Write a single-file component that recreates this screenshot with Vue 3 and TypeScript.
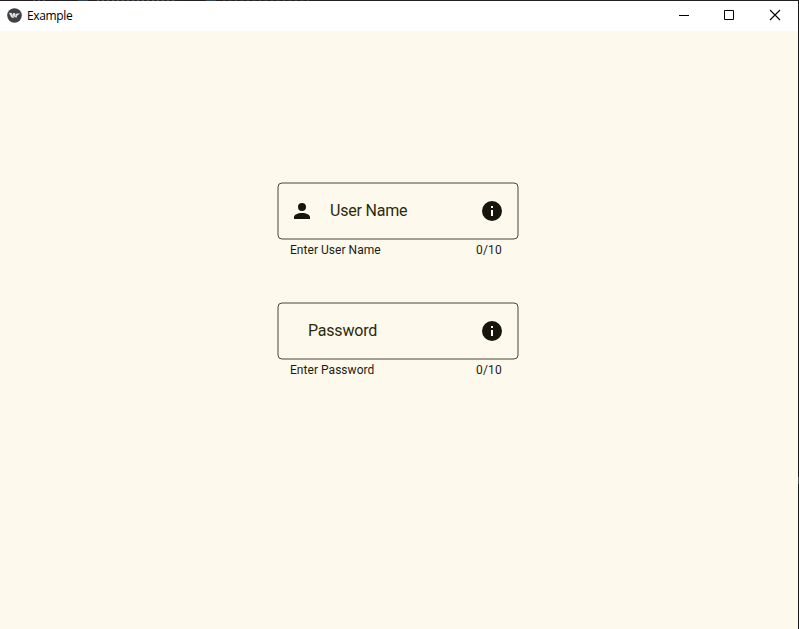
<script setup lang="ts">
interface Field {
  label: string
  helper: string
  count: string
  leadingIcon: boolean
}

const fields: Field[] = [
  { label: 'User Name', helper: 'Enter User Name', count: '0/10', leadingIcon: true },
  { label: 'Password', helper: 'Enter Password', count: '0/10', leadingIcon: false },
]
</script>

<template>
  <div class="window">
    <header class="titlebar">
      <svg class="logo" width="15" height="15" viewBox="0 0 15 15">
        <circle cx="7.5" cy="7.5" r="7.3" fill="#3f4145" />
        <path d="M2 4.8 L4.6 5 L5.7 6.8 L6.3 5 L8 5 L8.5 6.8 L9.6 5.5 L13.3 5.5 L10.5 7.3 L9.2 9.9 L7.6 8.6 L6.2 10.2 L4 9 Z" fill="#e3e4e5" />
        <path d="M5.2 6.7 L6.6 9.2 M8 6.2 L8.8 8.3" stroke="#77797c" stroke-width=".5" />
      </svg>
      <span class="title">Example</span>
      <div class="controls">
        <button class="control minimize" aria-label="Minimize">
          <svg width="12" height="12" viewBox="0 0 12 12" shape-rendering="crispEdges"><path d="M1 6h10v1H1z" /></svg>
        </button>
        <button class="control" aria-label="Maximize">
          <svg width="12" height="12" viewBox="0 0 12 12"><path d="M1.5 1.5h9v9h-9z" fill="none" stroke="#000" /></svg>
        </button>
        <button class="control" aria-label="Close">
          <svg width="12" height="12" viewBox="0 0 12 12"><path d="M1 1l10 10M11 1L1 11" fill="none" stroke="#000" stroke-width="1.1" /></svg>
        </button>
      </div>
    </header>
    <main class="content">
      <div v-for="field in fields" :key="field.label" class="field">
        <div class="box" :class="{ plain: !field.leadingIcon }">
          <svg class="outline" width="242" height="58" viewBox="0 0 242 58">
            <rect x="1" y="1" width="240" height="56" rx="4" fill="none" stroke="#48473b" />
          </svg>
          <svg v-if="field.leadingIcon" class="icon" width="24" height="24" viewBox="0 0 24 24">
            <path d="M12 4a4 4 0 1 1 0 8a4 4 0 0 1 0-8m0 10c4.42 0 8 1.79 8 4v2H4v-2c0-2.21 3.58-4 8-4" />
          </svg>
          <span class="label">{{ field.label }}</span>
          <svg class="icon" width="24" height="24" viewBox="0 0 24 24">
            <path d="M13 9h-2V7h2m0 10h-2v-6h2m-1-9a10 10 0 1 0 0 20a10 10 0 0 0 0-20" />
          </svg>
        </div>
        <div class="support">
          <span>{{ field.helper }}</span>
          <span class="count">{{ field.count }}</span>
        </div>
      </div>
    </main>
  </div>
</template>

<style>
body {
  margin: 0;
  overflow: hidden;
}
</style>

<style scoped>
.window {
  box-sizing: border-box;
  width: 799px;
  height: 629px;
  display: flex;
  flex-direction: column;
  padding: 1px 1px 0 0;
  background:
    linear-gradient(#454c5c, #454c5c) 798px 477px / 1px 7px no-repeat,
    linear-gradient(#2d4552, #2d4552) 78px 0 / 10px 1px no-repeat,
    linear-gradient(#2d4552, #2d4552) 206px 0 / 10px 1px no-repeat,
    repeating-linear-gradient(90deg, #544c55 0 2px, #2a262b 2px 5px) 97px 0 / 80px 1px no-repeat,
    repeating-linear-gradient(90deg, #433c40 0 2px, #252126 2px 6px) 223px 0 / 87px 1px no-repeat,
    repeating-linear-gradient(90deg, #4a464e 0 2px, #231f23 2px 5px) 33px 0 / 13px 1px no-repeat,
    linear-gradient(#231f23, #231f23) 0 0 / 799px 1px no-repeat,
    #1b1b1e;
  font-family: Roboto, sans-serif;
}
.titlebar {
  height: 30px;
  display: flex;
  align-items: center;
  background: #fff;
  padding-left: 7px;
}
.logo {
  margin-right: 5px;
  margin-bottom: 2px;
}
.title {
  font: 12px/16px "Open Sans", "Noto Sans", sans-serif;
  letter-spacing: -0.35px;
  color: #000;
}
.controls {
  display: flex;
  margin-left: auto;
  height: 28px;
  align-self: flex-start;
}
.control {
  width: 46px;
  padding: 0;
  border: 0;
  background: none;
  display: flex;
  align-items: center;
  justify-content: center;
}
.minimize {
  width: 44px;
}
.content {
  flex: 1;
  padding: 151px 0 0 277px;
  background: #fdf9ec;
}
.field {
  width: 242px;
  height: 120px;
}
.box {
  position: relative;
  box-sizing: border-box;
  height: 58px;
  display: flex;
  align-items: center;
  padding: 0 15px 0 13px;
}
.box.plain {
  padding-left: 31px;
}
.outline {
  position: absolute;
  inset: 0;
}
.icon {
  fill: #17160e;
  flex: none;
}
.label {
  font-size: 16px;
  line-height: 20px;
  letter-spacing: -0.2px;
  color: #2c2a0c;
  flex: 1;
}
.icon + .label {
  margin-left: 16px;
}
.support {
  display: flex;
  justify-content: space-between;
  padding: 3px 17px 0 13px;
  font-size: 12px;
  line-height: 14px;
  letter-spacing: 0.04px;
  color: #1c1b14;
}
.count {
  letter-spacing: 0.2px;
}
</style>
